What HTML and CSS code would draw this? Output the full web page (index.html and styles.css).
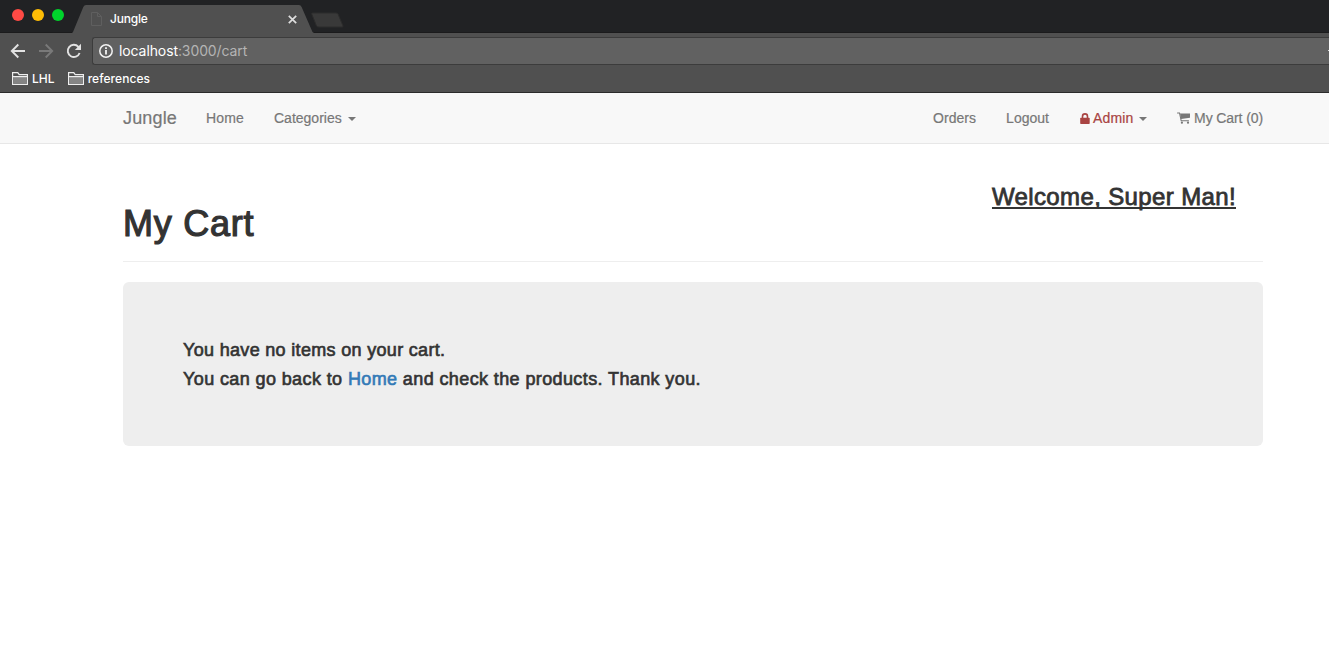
FILE: index.html
```html
<!DOCTYPE html>
<html lang="en">
<head>
<meta charset="utf-8">
<title>Jungle</title>
<link rel="stylesheet" href="styles.css">
</head>
<body>
<div class="browser">
  <div class="tabstrip">
    <div class="lights"><i class="light red"></i><i class="light yellow"></i><i class="light green"></i></div>
    <div class="tab">
      <svg class="tab-shape" width="244" height="29" viewBox="0 0 244 29"><path d="M0 29V28L1 27 11.300 2Q12.200 0 14 0H227Q228.800 0 229.600 2L240.500 27 242 28V29Z" fill="#505050"/></svg>
      <svg class="page-icon" width="11" height="14" viewBox="0 0 11 14"><path d="M.5.5h6l4 4v9H.5zM6.500.5v4h4" fill="none" stroke="#5f5f5f"/></svg>
      <span class="tab-title">Jungle</span>
      <svg class="tab-close" width="9" height="9" viewBox="0 0 9 9"><path d="M.8.8l7.400 7.400M8.200.8.8 8.200" stroke="#dedede" stroke-width="1.700"/></svg>
    </div>
    <svg class="new-tab" width="33" height="16" viewBox="0 0 33 16"><path d="M1.500 1H25q1.500 0 2 1l5 12q.5 1-1 1H8q-2 0-2.600-1.200L.7 2Q.3 1 1.500 1Z" fill="#393939" stroke="#2c2c2c"/></svg>
  </div>
  <div class="toolbar">
    <svg class="back" width="16" height="16" viewBox="0 0 16 16"><path d="M15 8H2M8.300 1.500 1.800 8l6.500 6.500" fill="none" stroke="#e2e2e2" stroke-width="1.900"/></svg>
    <svg class="forward" width="16" height="16" viewBox="0 0 16 16"><path d="M1 8h13M7.700 1.500 14.200 8l-6.500 6.500" fill="none" stroke="#797979" stroke-width="1.900"/></svg>
    <svg class="reload" width="16" height="16" viewBox="0 0 16 16"><path d="M13.600 10A6.100 6.100 0 1 1 12.400 3.800L14 5.500" fill="none" stroke="#e2e2e2" stroke-width="1.900"/><path d="M15 .8V7H8.800Z" fill="#e2e2e2"/></svg>
    <div class="omnibox">
      <svg width="14" height="14" viewBox="0 0 14 14"><circle cx="7" cy="7" r="6.200" fill="none" stroke="#f2f2f2" stroke-width="1.500"/><path d="M7 6v4.500M7 3.300v1.600" stroke="#f2f2f2" stroke-width="1.800"/></svg>
      <span class="url"><b>localhost</b>:3000/cart</span>
      <i class="star-tip"></i>
    </div>
  </div>
  <div class="bookmarks">
    <span class="bookmark"><svg width="16" height="13" viewBox="0 0 16 13"><path d="M.6 12.400V.6h5.200l1.400 2h8.200v9.800Z" fill="#505050" stroke="#eee" stroke-width="1.200"/><path d="M1.200 5h13.600v6.800H1.200z" fill="#858585"/><path d="M.6 4.600h14.800" stroke="#eee" stroke-width="1.200"/></svg><span class="lhl">LHL</span></span>
    <span class="bookmark"><svg width="16" height="13" viewBox="0 0 16 13"><path d="M.6 12.400V.6h5.200l1.400 2h8.200v9.800Z" fill="#505050" stroke="#eee" stroke-width="1.200"/><path d="M1.200 5h13.600v6.800H1.200z" fill="#858585"/><path d="M.6 4.600h14.800" stroke="#eee" stroke-width="1.200"/></svg><span class="refs">references</span></span>
  </div>
</div>
<nav class="navbar">
  <div class="nav-group">
    <a class="brand">Jungle</a>
    <a class="link home">Home</a>
    <a class="link cats">Categories<i class="caret"></i></a>
  </div>
  <div class="nav-group">
    <a class="link orders">Orders</a>
    <a class="link logout">Logout</a>
    <a class="link admin"><svg width="10" height="11" viewBox="0 0 10 11"><path d="M2.500 5V3.400a2.400 2.400 0 0 1 5 0V5" fill="none" stroke="#a94442" stroke-width="1.600"/><rect x=".2" y="4.700" width="9.500" height="6.200" rx=".7" fill="#a94442"/></svg><span class="admin-text">Admin</span><i class="caret"></i></a>
    <a class="link cart"><svg width="13" height="12" viewBox="0 0 13 12"><path d="M.5 1h2l1.700 7.800h7.300" fill="none" stroke="#777" stroke-width="1.100" stroke-linecap="round"/><path d="M3 1.600h10v4.200L4.100 7Z" fill="#777"/><circle cx="4.900" cy="10.700" r="1.100" fill="#777"/><circle cx="11" cy="10.700" r="1.100" fill="#777"/></svg><span class="cart-text">My Cart (0)</span></a>
  </div>
</nav>
<main class="container">
  <header class="page-header">
    <h1>My Cart</h1>
    <h3>Welcome, Super Man!</h3>
  </header>
  <section class="jumbotron">
    <p class="line1">You have no items on your cart.</p>
    <p class="line2">You can go back to <a>Home</a> and check the products. Thank you.</p>
  </section>
</main>
</body>
</html>
```
FILE: styles.css
```css
* { box-sizing: border-box; }
body { margin: 0; height: 647px; overflow: hidden; background: #fff; color: #333; font-family: "Liberation Sans", Arial, sans-serif; }
svg { display: block; flex: none; }
.browser { height: 93px; background: #505050; border-bottom: 1px solid #2b2b2b; font-family: Inter, sans-serif; color: #fff; }
.tabstrip { height: 33px; background: #212224; border-bottom: 1px solid #1b1b1c; display: flex; align-items: flex-start; }
.lights { display: flex; gap: 8px; padding: 9px 0 0 12px; width: 72px; flex: none; }
.light { width: 12px; height: 12px; border-radius: 50%; }
.red { background: #ff4a45; }
.yellow { background: #ffbd05; }
.green { background: #00d42c; }
.tab { position: relative; width: 244px; height: 29px; margin-top: 5px; display: flex; align-items: flex-start; flex: none; }
.tab-shape { position: absolute; left: 0; top: 0; }
.page-icon { position: relative; margin: 7px 0 0 19px; }
.tab-title { position: relative; margin: 6px 0 0 8px; width: 178px; font-size: 12px; line-height: 16px; font-weight: 500; letter-spacing: -.2px; }
.tab-close { position: relative; margin-top: 10px; }
.new-tab { margin: 12px 0 0 -5px; }
.toolbar { height: 32px; display: flex; align-items: flex-start; padding: 4px 0 0 10px; }
.toolbar > svg { margin: 6px 12px 0 0; }
.toolbar .reload { margin-right: 10px; }
.omnibox { flex: 1; height: 28px; background: #616161; border: 1px solid #3c3c3c; border-right: 0; border-radius: 3px 0 0 3px; display: flex; align-items: center; padding-left: 6px; }
.url { margin-left: 6px; font-size: 14px; line-height: 20px; color: #b4b4b4; letter-spacing: -.1px; }
.url b { font-weight: 400; color: #fff; }
.star-tip { margin-left: auto; width: 1px; height: 1px; background: #ddd; margin-top: -2px; }
.bookmarks { display: flex; gap: 13px; padding: 5px 0 0 12px; font-size: 12px; line-height: 16px; font-weight: 500; letter-spacing: .05px; }
.bookmark { display: flex; align-items: center; gap: 4px; height: 17px; }
.navbar { height: 51px; background: #f8f8f8; border-bottom: 1px solid #e7e7e7; padding: 0 66px 0 123px; display: flex; justify-content: space-between; color: #777; -webkit-text-stroke: .2px currentColor; }
.nav-group { display: flex; align-items: center; height: 50px; white-space: nowrap; }
.brand { font-size: 18px; line-height: 20px; width: 83px; letter-spacing: .15px; }
.link { display: flex; align-items: center; font-size: 14px; line-height: 20px; }
.home { width: 68px; letter-spacing: .15px; }
.orders { width: 73px; }
.logout { width: 74px; }
.admin { width: 97px; color: #a94442; }
.admin svg { margin-right: 3px; }
.admin-text { letter-spacing: .15px; }
.cart svg { margin-right: 4px; }
.cart-text { letter-spacing: -.1px; }
.caret { margin: 2px 0 0 6px; border-top: 4px solid #777; border-left: 4px solid transparent; border-right: 4px solid transparent; }
.admin .caret { margin-left: 5px; }
.container { width: 1140px; margin-left: 123px; }
.page-header { height: 118px; border-bottom: 1px solid #eee; display: flex; justify-content: space-between; padding-right: 27px; margin: 0 0 20px; }
h1, h3 { margin: 0; font-weight: 400; white-space: nowrap; }
h1 { font-size: 36px; line-height: 40px; padding-top: 60px; letter-spacing: .75px; -webkit-text-stroke: 1.2px #333; }
h3 { font-size: 24px; line-height: 26px; padding-top: 40px; letter-spacing: .37px; -webkit-text-stroke: .8px #333; text-decoration: underline; text-decoration-thickness: 2px; text-underline-offset: 2px; text-decoration-skip-ink: none; }
.jumbotron { height: 164px; background: #eee; border-radius: 6px; padding: 54px 60px; }
.jumbotron p { margin: 0; font-size: 18px; line-height: 29px; letter-spacing: .39px; -webkit-text-stroke: .65px currentColor; white-space: nowrap; }
.jumbotron .line1 { letter-spacing: .32px; }
.jumbotron a { color: #337ab7; }
```
